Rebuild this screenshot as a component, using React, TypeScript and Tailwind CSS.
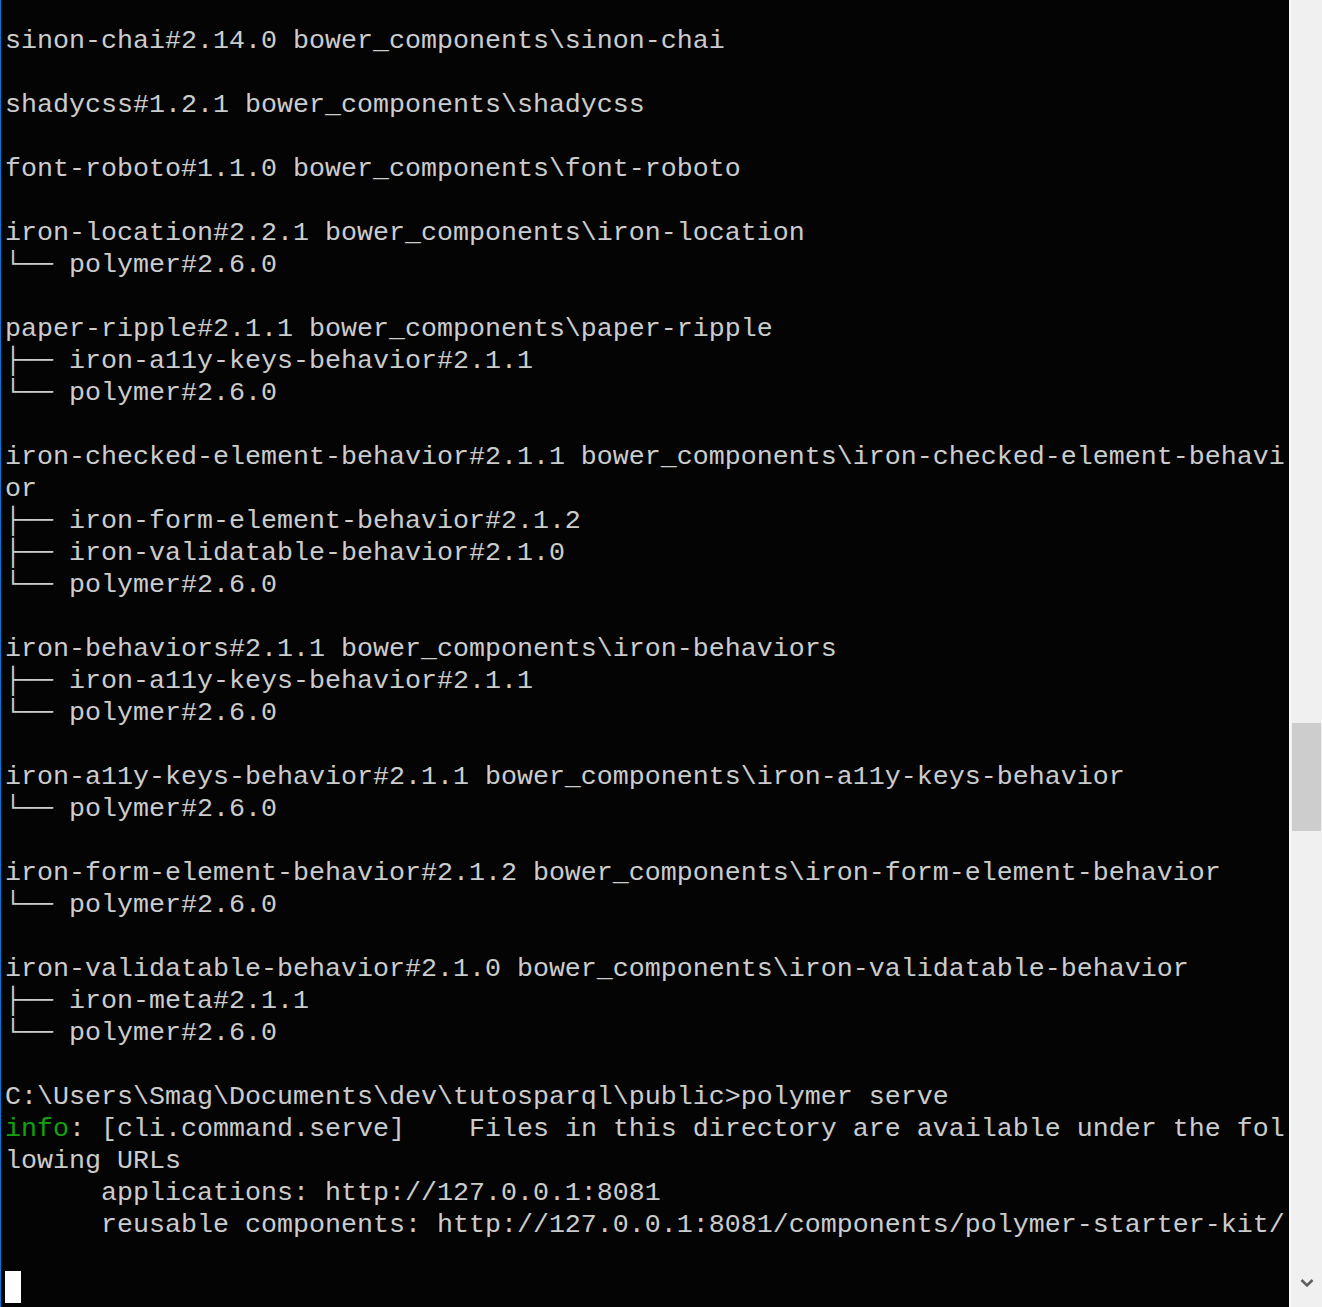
const lines: string[] = [
  "sinon-chai#2.14.0 bower_components\\sinon-chai",
  "",
  "shadycss#1.2.1 bower_components\\shadycss",
  "",
  "font-roboto#1.1.0 bower_components\\font-roboto",
  "",
  "iron-location#2.2.1 bower_components\\iron-location",
  "└── polymer#2.6.0",
  "",
  "paper-ripple#2.1.1 bower_components\\paper-ripple",
  "├── iron-a11y-keys-behavior#2.1.1",
  "└── polymer#2.6.0",
  "",
  "iron-checked-element-behavior#2.1.1 bower_components\\iron-checked-element-behavi",
  "or",
  "├── iron-form-element-behavior#2.1.2",
  "├── iron-validatable-behavior#2.1.0",
  "└── polymer#2.6.0",
  "",
  "iron-behaviors#2.1.1 bower_components\\iron-behaviors",
  "├── iron-a11y-keys-behavior#2.1.1",
  "└── polymer#2.6.0",
  "",
  "iron-a11y-keys-behavior#2.1.1 bower_components\\iron-a11y-keys-behavior",
  "└── polymer#2.6.0",
  "",
  "iron-form-element-behavior#2.1.2 bower_components\\iron-form-element-behavior",
  "└── polymer#2.6.0",
  "",
  "iron-validatable-behavior#2.1.0 bower_components\\iron-validatable-behavior",
  "├── iron-meta#2.1.1",
  "└── polymer#2.6.0",
  "",
  "C:\\Users\\Smag\\Documents\\dev\\tutosparql\\public>polymer serve",
];

export default function App() {
  return (
    <div className="flex w-[1322px] h-[1307px] overflow-hidden bg-[#f0f0f0]">
      {/* console */}
      <div
        className="w-[1289px] h-full bg-[#040404] border-l border-[#0078d7] pl-[4px] pt-[25px] text-[#cccccc] text-[26.6667px] leading-[32px] whitespace-pre"
        style={{ fontFamily: '"Liberation Mono", "Courier New", monospace' }}
      >
        {lines.map((l, i) => (
          <div key={i} className="h-[32px]">
            {l}
          </div>
        ))}
        <div className="h-[32px]">
          <span className="text-[#13a10e]">info</span>
          {": [cli.command.serve]    Files in this directory are available under the fol"}
        </div>
        <div className="h-[32px]">lowing URLs</div>
        <div className="h-[32px]">{"      applications: http://127.0.0.1:8081"}</div>
        <div className="h-[32px]">
          {"      reusable components: http://127.0.0.1:8081/components/polymer-starter-kit/"}
        </div>
        <div className="h-[32px]"></div>
        <div className="h-[32px] -mt-[2px]">
          <div className="w-[16px] h-[32px] bg-white"></div>
        </div>
      </div>

      {/* scrollbar */}
      <div className="flex-1 flex flex-col border-l-2 border-[#f8f8f8] bg-[#f0f0f0]">
        <div className="mt-[723px] h-[108px] mx-[1px] bg-[#cdcdcd]"></div>
        <div className="flex-1"></div>
        <div className="h-[32px] flex items-start justify-center pt-[2px]">
          <svg width="14" height="12" viewBox="0 0 14 12">
            <path d="M1.5 3 L7 8.5 L12.5 3" fill="none" stroke="#606060" strokeWidth="2.6" />
          </svg>
        </div>
      </div>
    </div>
  );
}
